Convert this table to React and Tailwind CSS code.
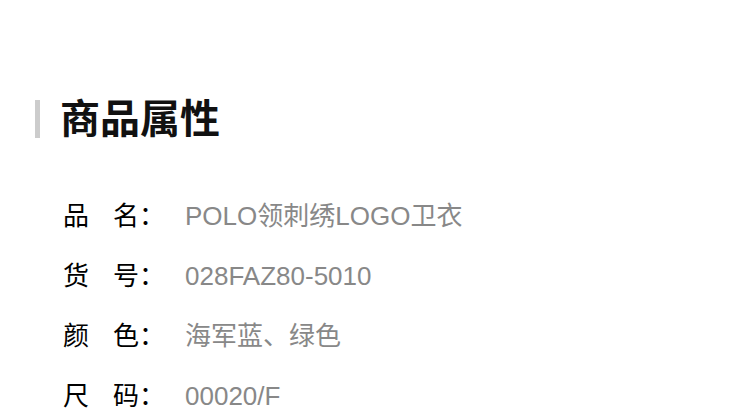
export default function App() {
  const rows = [
    ["品", "名", "POLO领刺绣LOGO卫衣"],
    ["货", "号", "028FAZ80-5010"],
    ["颜", "色", "海军蓝、绿色"],
    ["尺", "码", "00020/F"],
  ];
  return (
    <div className="w-[750px] h-[417px] overflow-hidden bg-white pl-[35px] font-['Liberation_Sans','Noto_Sans_CJK_SC',sans-serif]">
      <div className="mt-[99px] flex h-[40px] items-center">
        <div className="h-[38px] w-[5px] bg-[#cccccc]" />
        <div className="ml-[20px] text-[40px] leading-none font-bold text-[#111111]">商品属性</div>
      </div>
      <div className="mt-[47px] ml-[28px] flex flex-col">
        {rows.map(([a, b, v]) => (
          <div key={a} className="flex h-[60px] items-center text-[26px] leading-none">
            <div className="flex w-[122px] shrink-0 text-[#000000]">
              <span className="w-[50px]">{a}</span>
              <span>{b}：</span>
            </div>
            <div className="text-[#888888]">{v}</div>
          </div>
        ))}
      </div>
    </div>
  );
}
